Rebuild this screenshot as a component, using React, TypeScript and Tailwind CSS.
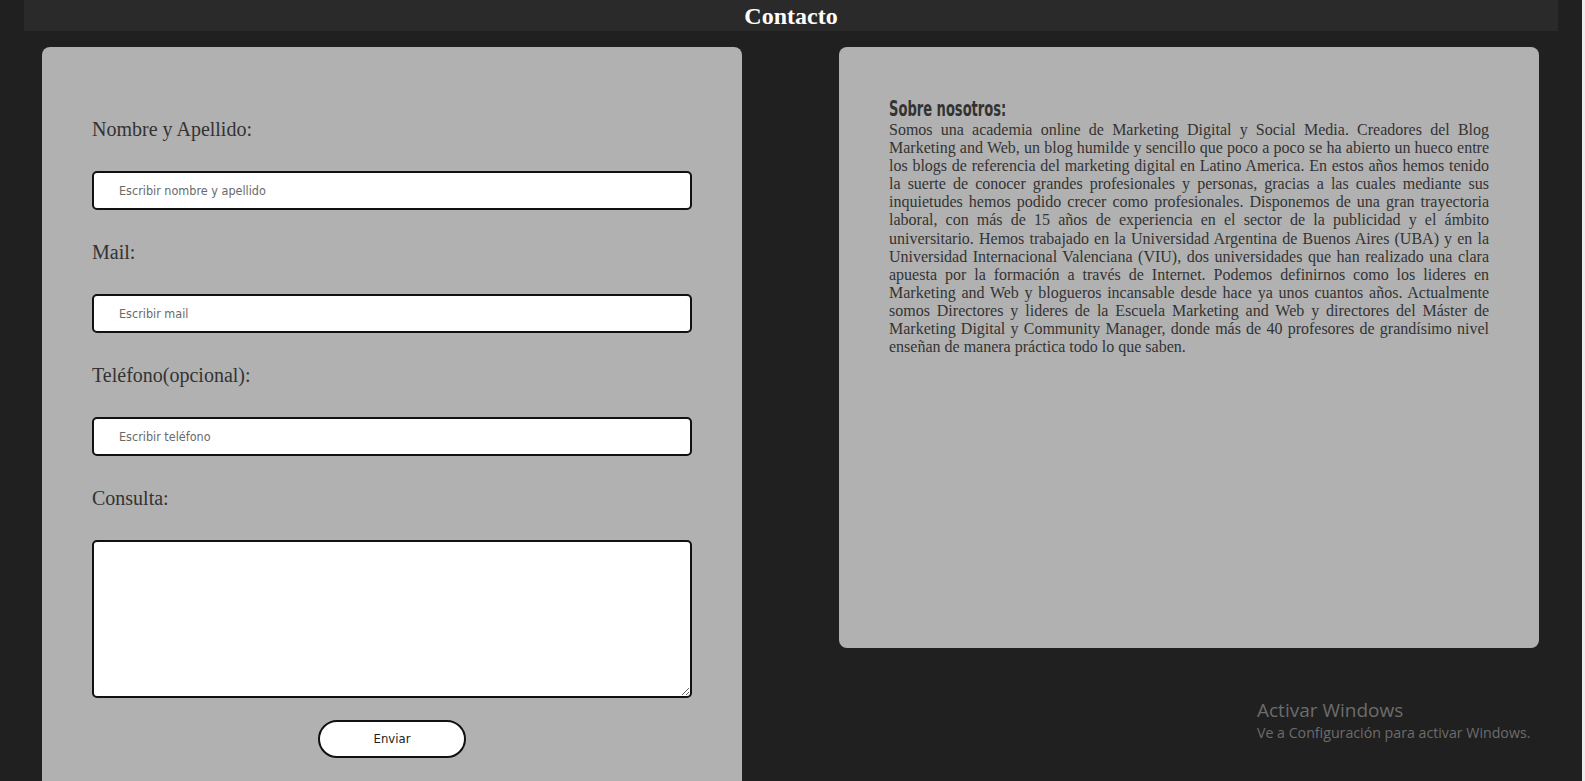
import React from "react";

const fields = [
  { label: "Nombre y Apellido:", placeholder: "Escribir nombre y apellido" },
  { label: "Mail:", placeholder: "Escribir mail" },
  { label: "Teléfono(opcional):", placeholder: "Escribir teléfono" },
];

const about =
  "Somos una academia online de Marketing Digital y Social Media. Creadores del Blog Marketing and Web, un blog humilde y sencillo que poco a poco se ha abierto un hueco entre los blogs de referencia del marketing digital en Latino America. En estos años hemos tenido la suerte de conocer grandes profesionales y personas, gracias a las cuales mediante sus inquietudes hemos podido crecer como profesionales. Disponemos de una gran trayectoria laboral, con más de 15 años de experiencia en el sector de la publicidad y el ámbito universitario. Hemos trabajado en la Universidad Argentina de Buenos Aires (UBA) y en la Universidad Internacional Valenciana (VIU), dos universidades que han realizado una clara apuesta por la formación a través de Internet. Podemos definirnos como los lideres en Marketing and Web y blogueros incansable desde hace ya unos cuantos años. Actualmente somos Directores y lideres de la Escuela Marketing and Web y directores del Máster de Marketing Digital y Community Manager, donde más de 40 profesores de grandísimo nivel enseñan de manera práctica todo lo que saben.";

export default function App() {
  return (
    <div className="relative flex h-screen overflow-hidden bg-[#202020]">
      <div className="flex-1">
        {/* header */}
        <header className="mx-[24px] flex h-[31px] items-center justify-center bg-[#2a2a2a]">
          <h1 className="font-['Liberation_Serif',serif] text-[24px] font-bold leading-none text-white">
            Contacto
          </h1>
        </header>

        <main className="mt-[16px] flex gap-[97px] pl-[42px]">
          {/* form card */}
          <form className="flex w-[700px] flex-col rounded-[8px] bg-[#b1b1b1] px-[50px] pt-[70px] pb-[60px]">
            {fields.map((f) => (
              <div key={f.label} className="flex flex-col">
                <label className="font-['Liberation_Serif',serif] text-[20px] leading-[24px] text-[#333]">
                  {f.label}
                </label>
                <input
                  placeholder={f.placeholder}
                  className="mt-[30px] mb-[30px] h-[39px] w-full rounded-[5px] border-2 border-[#111] bg-white px-[25px] font-['DejaVu_Sans_Condensed','DejaVu_Sans',sans-serif] text-[12.5px] text-[#222] placeholder:text-[#6a6a6a] focus:outline-none"
                />
              </div>
            ))}
            <label className="font-['Liberation_Serif',serif] text-[20px] leading-[24px] text-[#333]">
              Consulta:
            </label>
            <textarea className="mt-[30px] h-[158px] w-full rounded-[5px] border-2 border-[#111] bg-white focus:outline-none" />
            <button
              type="button"
              className="mx-auto mt-[22px] h-[38px] w-[148px] rounded-full border-2 border-[#111] bg-white font-['DejaVu_Sans_Condensed','DejaVu_Sans',sans-serif] text-[13px] text-[#222]"
            >
              Enviar
            </button>
          </form>

          {/* about card */}
          <section className="h-[601px] w-[700px] rounded-[8px] bg-[#b1b1b1] px-[50px] pt-[50px]">
            <h2 className="h-[24px] font-['Liberation_Sans_Narrow','DejaVu_Sans_Condensed',sans-serif] text-[22px] font-bold leading-[24px] text-[#333]">
              <span className="inline-block origin-left scale-x-[0.66]">Sobre nosotros:</span>
            </h2>
            <p className="text-justify font-['Liberation_Serif',serif] text-[16px] leading-[18.1px] text-[#333]">
              {about}
            </p>
          </section>
        </main>
      </div>
      <div className="w-[3px] bg-[#ececec]" />

      {/* windows watermark */}
      <div className="pointer-events-none absolute top-[698px] left-[1257px] font-['Open_Sans',sans-serif] text-[#6c6c6c]">
        <div className="text-[19px] leading-[24px]">Activar Windows</div>
        <div className="text-[14.2px] leading-[22px]">Ve a Configuración para activar Windows.</div>
      </div>
    </div>
  );
}
